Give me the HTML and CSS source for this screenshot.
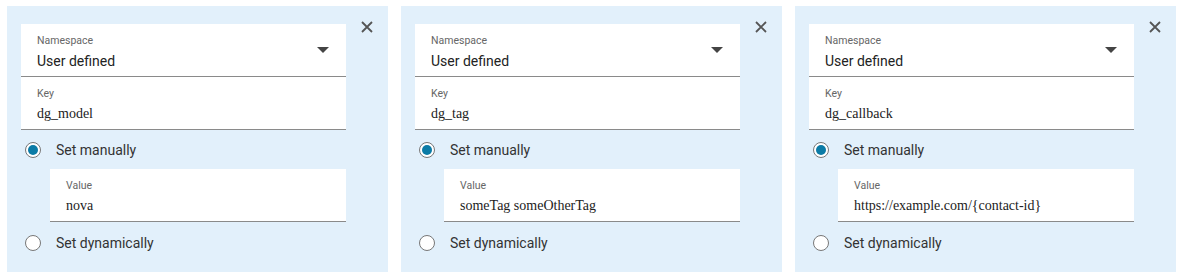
FILE: index.html
```html
<!DOCTYPE html>
<html lang="en">
<head>
  <meta charset="UTF-8" />
  <title>Attributes</title>
  <link rel="stylesheet" href="styles.css">
</head>
<body>
  <div class="attr-list">

    <div class="attr-card">
      <div class="attr-body">
        <div class="field select">
          <div class="field-text">
            <span class="label">Namespace</span>
            <span class="value sans">User defined</span>
          </div>
          <svg class="arrow" width="12" height="6" viewBox="0 0 12 6"><path d="M0 0h12L6 6z"/></svg>
        </div>
        <div class="field">
          <div class="field-text">
            <span class="label">Key</span>
            <span class="value">dg_model</span>
          </div>
        </div>
        <label class="radio-row first">
          <span class="radio checked"></span>Set manually
        </label>
        <div class="field nested">
          <div class="field-text">
            <span class="label">Value</span>
            <span class="value">nova</span>
          </div>
        </div>
        <label class="radio-row">
          <span class="radio"></span>Set dynamically
        </label>
      </div>
      <button class="close" aria-label="Remove">
        <svg width="12" height="12" viewBox="0 0 12 12"><path d="M1 1l10 10M11 1L1 11"/></svg>
      </button>
    </div>

    <div class="attr-card">
      <div class="attr-body">
        <div class="field select">
          <div class="field-text">
            <span class="label">Namespace</span>
            <span class="value sans">User defined</span>
          </div>
          <svg class="arrow" width="12" height="6" viewBox="0 0 12 6"><path d="M0 0h12L6 6z"/></svg>
        </div>
        <div class="field">
          <div class="field-text">
            <span class="label">Key</span>
            <span class="value">dg_tag</span>
          </div>
        </div>
        <label class="radio-row first">
          <span class="radio checked"></span>Set manually
        </label>
        <div class="field nested">
          <div class="field-text">
            <span class="label">Value</span>
            <span class="value">someTag someOtherTag</span>
          </div>
        </div>
        <label class="radio-row">
          <span class="radio"></span>Set dynamically
        </label>
      </div>
      <button class="close" aria-label="Remove">
        <svg width="12" height="12" viewBox="0 0 12 12"><path d="M1 1l10 10M11 1L1 11"/></svg>
      </button>
    </div>

    <div class="attr-card">
      <div class="attr-body">
        <div class="field select">
          <div class="field-text">
            <span class="label">Namespace</span>
            <span class="value sans">User defined</span>
          </div>
          <svg class="arrow" width="12" height="6" viewBox="0 0 12 6"><path d="M0 0h12L6 6z"/></svg>
        </div>
        <div class="field">
          <div class="field-text">
            <span class="label">Key</span>
            <span class="value">dg_callback</span>
          </div>
        </div>
        <label class="radio-row first">
          <span class="radio checked"></span>Set manually
        </label>
        <div class="field nested">
          <div class="field-text">
            <span class="label">Value</span>
            <span class="value">https://example.com/{contact-id}</span>
          </div>
        </div>
        <label class="radio-row">
          <span class="radio"></span>Set dynamically
        </label>
      </div>
      <button class="close" aria-label="Remove">
        <svg width="12" height="12" viewBox="0 0 12 12"><path d="M1 1l10 10M11 1L1 11"/></svg>
      </button>
    </div>

  </div>
</body>
</html>
```

FILE: styles.css
```css
body {
  margin: 0;
  padding: 6px 7px;
  background: #fff;
  font-family: Roboto, "Liberation Sans", sans-serif;
  color: #222;
}

.attr-list {
  display: flex;
  gap: 13px;
}

.attr-card {
  width: 381px;
  box-sizing: border-box;
  display: flex;
  padding: 18px 0 8px 14px;
  background: #e2f0fb;
}

.attr-body {
  width: 325px;
  display: flex;
  flex-direction: column;
}

.field {
  display: flex;
  align-items: center;
  height: 52px;
  padding: 0 16px;
  background: #fff;
  border-bottom: 1px solid #8a8a8a;
}

.field-text {
  flex: 1;
  display: flex;
  flex-direction: column;
  padding-top: 5px;
}

.label {
  font-size: 10.5px;
  line-height: 14px;
  color: #666;
}

.value {
  margin-top: 3px;
  font-family: "Liberation Serif", serif;
  font-size: 14px;
  line-height: 20px;
  color: #222;
}

.value.sans {
  font-family: Roboto, "Liberation Sans", sans-serif;
}

.arrow {
  fill: #444;
  margin-right: 1px;
}

.nested {
  margin-left: 29px;
}

.radio-row {
  display: flex;
  align-items: center;
  height: 42px;
  padding-left: 4px;
  font-size: 14px;
  color: #333;
  cursor: pointer;
}

.radio-row.first {
  height: 39px;
}

.radio {
  width: 16px;
  height: 16px;
  box-sizing: border-box;
  margin-right: 15px;
  border: 1px solid #777;
  border-radius: 50%;
  background: #fff;
  position: relative;
}

.radio.checked::after {
  content: "";
  position: absolute;
  left: 2px;
  top: 2px;
  width: 10px;
  height: 10px;
  border-radius: 50%;
  background: #0b7ba6;
}

.close {
  width: 24px;
  height: 24px;
  margin: -9px 0 0 9px;
  padding: 0;
  border: none;
  background: none;
  display: flex;
  align-items: center;
  justify-content: center;
  cursor: pointer;
}

.close svg {
  stroke: #555;
  stroke-width: 1.8;
}
```
